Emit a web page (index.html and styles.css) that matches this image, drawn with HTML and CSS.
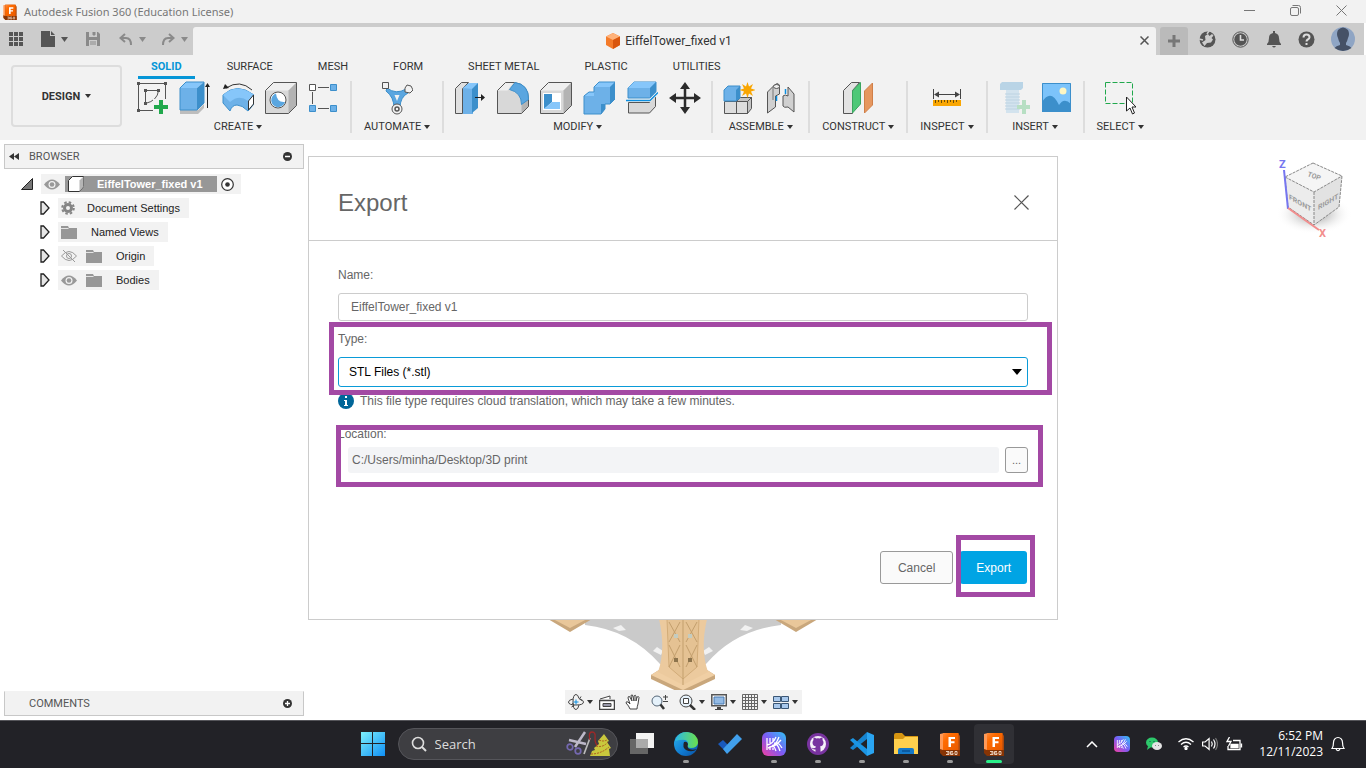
FILE: index.html
```html
<!DOCTYPE html>
<html lang="en">
<head>
<meta charset="utf-8">
<title>Autodesk Fusion 360 (Education License)</title>
<link rel="stylesheet" href="styles.css">
</head>
<body>
<svg class="defs" aria-hidden="true">
  <defs>
    <linearGradient id="g-orange" x1="0" y1="0" x2="1" y2="1"><stop offset="0" stop-color="#ff8a3c"/><stop offset=".3" stop-color="#ff6b00"/><stop offset="1" stop-color="#e85a00"/></linearGradient>
    <linearGradient id="g-win" x1="0" y1="0" x2="1" y2="1"><stop offset="0" stop-color="#7df0fb"/><stop offset="1" stop-color="#0f8ff5"/></linearGradient>
    <linearGradient id="g-k" x1="0" y1="1" x2="1" y2="0"><stop offset="0" stop-color="#f43fa0"/><stop offset=".5" stop-color="#7a5cf5"/><stop offset="1" stop-color="#2fc4f5"/></linearGradient>
    <linearGradient id="g-edge" x1="0" y1="0" x2="1" y2="1"><stop offset="0" stop-color="#2bb5ee"/><stop offset=".6" stop-color="#0f78cf"/><stop offset="1" stop-color="#0b4f9e"/></linearGradient>
    <linearGradient id="g-edge2" x1="0" y1="0" x2="1" y2="0"><stop offset="0" stop-color="#2bb8e8"/><stop offset="1" stop-color="#6be04a"/></linearGradient>
    <symbol id="fusion" viewBox="0 0 24 24">
      <path d="M2 2l4-1v22l-4-3z" fill="#ff9a58"/><path d="M5 1h15l2 3v20H5z" fill="#a8480f"/><path d="M5 1h15.500v17H5z" fill="url(#g-orange)"/><path d="M2 17l3 1v6l-3-3zM5 18h17v6H5z" fill="#873404"/>
      <path d="M10.500 5h6.500v2h-4v2.300h3.500v2H13V15h-2.500z" fill="#fff"/><path d="M8 19.500h3v3H8M9 21h2M15 19.500h-2.500v3H15V21h-2M17 19.500h2v3h-2z" fill="none" stroke="#f1dccb" stroke-width=".9"/>
    </symbol>
    <symbol id="kapp" viewBox="0 0 24 24"><rect width="24" height="24" rx="6" fill="url(#g-k)"/><path d="M5 6v12M8 6v5M8 14v4M11 6v4M11 16v2M14 5Q11 12 5 13M17 5Q14 14 6 16M19 8Q15 13 10 15M12 11q4 1 6 8M10 13q3 2 4 6M14 10q4 2 6 6" fill="none" stroke="#fff" stroke-width="1.300"/></symbol>
    <symbol id="folder" viewBox="0 0 16 13"><path d="M0 0h7l1 2h8v11H0z" fill="#979797"/><path d="M0 2.500h7.500" stroke="#e4e4e4"/></symbol>
    <symbol id="eye" viewBox="0 0 16 11"><path d="M0 5.500Q8-4.500 16 5.500Q8 15.500 0 5.500z" fill="#999"/><circle cx="8" cy="5.500" r="3.500" fill="#f2f2f2"/><circle cx="8" cy="5.500" r="2.300" fill="#999"/></symbol>
    <symbol id="twist" viewBox="0 0 10 14"><path d="M1 1h2.500l5.500 6-5.500 6H1z" fill="#e6e6e6" stroke="#222" stroke-width="1.300"/></symbol>
  </defs>
</svg>

<header class="titlebar">
  <svg class="i16" viewBox="0 0 24 24"><use href="#fusion"/></svg>
  <span class="titlebar-text">Autodesk Fusion 360 (Education License)</span>
  <div class="window-controls">
    <button aria-label="Minimize"><svg width="11" height="11"><path d="M0 5.500h11" stroke="#777"/></svg></button>
    <button aria-label="Restore"><svg width="11" height="11" fill="none" stroke="#777"><rect x=".5" y="2.500" width="8" height="8" rx="1.500"/><path d="M2.500.5h6a2 2 0 0 1 2 2v6"/></svg></button>
    <button aria-label="Close"><svg width="11" height="11"><path d="M.5.5l10 10M10.500.5l-10 10" stroke="#777"/></svg></button>
  </div>
</header>

<div class="quickbar">
  <div class="quick-tools">
    <button aria-label="Data panel"><svg width="14" height="14" fill="#555"><path d="M0 0h4v4H0zM5 0h4v4H5zM10 0h4v4h-4zM0 5h4v4H0zM5 5h4v4H5zM10 5h4v4h-4zM0 10h4v4H0zM5 10h4v4H5zM10 10h4v4h-4z"/></svg></button>
    <button class="with-caret" aria-label="File"><svg width="14" height="16"><path d="M0 0h9v5h5v11H0z" fill="#555"/><path d="M10 0l4 4h-4z" fill="#555"/></svg><svg class="caret" width="7" height="5"><path d="M0 0h7L3.500 5z" fill="#555"/></svg></button>
    <button class="save" aria-label="Save"><svg width="14" height="14"><path d="M0 0h12l2 2v12H0z" fill="#8a8a8a"/><path d="M3 0h8v5H3zM3 8h8v6H3z" fill="#ccc"/><path d="M7 0h2v3H7zM4 10h6M4 12h6" fill="#8a8a8a" stroke="#8a8a8a"/></svg></button>
    <button class="with-caret" aria-label="Undo"><svg width="14" height="13" fill="none" stroke="#8a8a8a" stroke-width="2"><path d="M6 1L1.500 5 6 9M2 5h5q5 0 5 7"/></svg><svg class="caret" width="7" height="5"><path d="M0 0h7L3.500 5z" fill="#8a8a8a"/></svg></button>
    <button class="with-caret" aria-label="Redo"><svg width="14" height="13" fill="none" stroke="#8a8a8a" stroke-width="2"><path d="M8 1l4.500 4L8 9M12 5H7q-5 0-5 7"/></svg><svg class="caret" width="7" height="5"><path d="M0 0h7L3.500 5z" fill="#8a8a8a"/></svg></button>
  </div>
  <div class="doc-tab">
    <svg width="16" height="16"><path d="M8 0l7 3.500v8.500L8 16l-7-4V3.500z" fill="#f47b2a"/><path d="M8 0l7 3.500L8 7 1 3.500z" fill="#ffb27a"/><path d="M8 7l7-3.500v8.500L8 16z" fill="#d9560e"/></svg>
    <span>EiffelTower_fixed v1</span>
    <button class="tab-close" aria-label="Close tab"><svg width="9" height="9"><path d="M.5.5l8 8M8.500.5l-8 8" stroke="#555" stroke-width="1.500"/></svg></button>
  </div>
  <div class="quick-right">
    <button class="new-tab" aria-label="New tab"><svg width="14" height="14"><path d="M7 1v12M1 7h12" stroke="#777" stroke-width="3"/></svg></button>
    <button aria-label="Extensions"><svg width="17" height="17"><circle cx="8.500" cy="8.500" r="8" fill="#555"/><path d="M3 11.500l3.500-2.500-.5-4 3-2 1.500 2 2.500-2 1.500 1.500-2 2.500 1.500 1.500-2 3-4 .5-2.500 3z" fill="#ccc"/><path d="M0 8l4 1M10 0l-2 3" stroke="#ccc" stroke-width="1.500"/></svg></button>
    <button aria-label="Job status"><svg width="17" height="17"><circle cx="8.500" cy="8.500" r="7.700" fill="none" stroke="#555"/><circle cx="8.500" cy="8.500" r="6.200" fill="#555"/><path d="M8.500 4v5H12" fill="none" stroke="#ddd" stroke-width="1.600"/></svg></button>
    <button aria-label="Notifications"><svg width="14" height="17"><path d="M6 0h2v2q4 1 4 5 0 4 2 6v1H0v-1q2-2 2-6 0-4 4-5zM5 15h4q-2 3-4 0z" fill="#555"/></svg></button>
    <button aria-label="Help"><svg width="17" height="17"><circle cx="8.500" cy="8.500" r="8" fill="#555"/><path d="M5.500 6.500q0-3 3-3t3 2.700q0 1.500-1.700 2.300-1.300.7-1.300 2" fill="none" stroke="#ddd" stroke-width="2"/><path d="M7.500 12h2v2h-2z" fill="#ddd"/></svg></button>
    <button class="avatar" aria-label="Account"><svg width="24" height="24"><circle cx="12" cy="12" r="12" fill="#8fa5c4"/><path d="M7 3q5-5 10 0 2 4 0 8-1 4-2 5v2q4 1 5.500 3Q12 27 3.500 21q1.500-2 5.500-3v-2q-1-1-2-5-2-4 0-8z" fill="#455166"/></svg></button>
  </div>
</div>

<div class="ribbon">
  <button class="workspace">DESIGN <svg width="6" height="4"><path d="M0 0h6L3 4z" fill="#333"/></svg></button>
  <div class="ribbon-main">
    <nav class="tabs">
      <button class="tab active">SOLID</button><button class="tab">SURFACE</button><button class="tab">MESH</button><button class="tab">FORM</button><button class="tab">SHEET METAL</button><button class="tab">PLASTIC</button><button class="tab">UTILITIES</button>
    </nav>
    <div class="groups">
      <section class="group">
        <div class="tools">
          <button aria-label="Create sketch"><svg viewBox="0 0 32 34"><path d="M2.500 2.500h27v27h-27z" fill="none" stroke="#555"/><path d="M9.500 9.500h13M9.500 9.500v13M22.500 9.500q-1 10-13 13" fill="none" stroke="#555"/><path d="M1 1h3v3H1zM28 1h3v3h-3zM1 28h3v3H1zM8 8h3v3H8zM21 8h3v3h-3zM8 21h3v3H8z" fill="#555"/><path d="M17 18h15v15H17z" fill="#f2f2f2"/><path d="M23 19h4v5h5v4h-5v5h-4v-5h-5v-4h5z" fill="#20a84c"/></svg></button>
          <button aria-label="Extrude"><svg viewBox="0 0 32 34"><path d="M1 29h18l6-6v4l-6 6H1z" fill="#bdbdbd"/><path d="M1 7h17v22H1z" fill="#6db1e8"/><path d="M1 7l6-6h18l-7 6z" fill="#86c6fa"/><path d="M18 7l7-6v21l-7 7z" fill="#3c8fcb"/><path d="M1 29V7l6-6h18v21l-7 7z" fill="none" stroke="#3c8fcb"/><path d="M28.500 27V4" stroke="#222"/><path d="M26 6l2.500-4L31 6z" fill="#222"/></svg></button>
          <button aria-label="Revolve"><svg viewBox="0 0 32 34"><path d="M1 14q14-13 31 0v9l-6 7q-6-6-11-6t-7 6l-7-8z" fill="#6db1e8" stroke="#3c8fcb"/><path d="M1 14q14-13 31 0l-6 6q-9-7-18 1z" fill="#86c6fa"/><path d="M26.500 20l5-6v9l-5 6z" fill="#fff" stroke="#333"/><path d="M4 7q14-9 26 2" fill="none" stroke="#333"/><path d="M1 8l2-5 4 4z" fill="#222"/></svg></button>
          <button aria-label="Hole"><svg viewBox="0 0 32 34"><path d="M.5 9.500l8-8h23v23l-8 8H.5z" fill="#d8d8d8"/><path d="M.5 9.500l8-8h23l-8 8z" fill="#efefef"/><path d="M23.500 9.500l8-8v23l-8 8z" fill="#b3b3b3"/><path d="M.5 9.500l8-8h23v23l-8 8H.5z" fill="none" stroke="#555"/><circle cx="13" cy="19" r="8" fill="#fff" stroke="#555"/><path d="M11 12.500a7 7 0 1 0 9 8.500q-8 1-9-8.500z" fill="#5aa6e0"/></svg></button>
          <button aria-label="Pattern"><svg viewBox="0 0 32 34"><path d="M10 6.500h11M10 27.500h11M4.500 11v12" stroke="#555"/><path d="M1.500 3.500h6v6h-6z" fill="#fff" stroke="#555"/><path d="M22.500 3.500h6v6h-6zM22.500 24.500h6v6h-6zM1.500 24.500h6v6h-6z" fill="#6db1e8" stroke="#3c8fcb"/></svg></button>
        </div>
        <button class="group-label">CREATE <svg width="6" height="4"><path d="M0 0h6L3 4z" fill="#333"/></svg></button>
      </section>
      <section class="group">
        <div class="tools">
          <button aria-label="Automated modeling"><svg viewBox="0 0 32 34"><path d="M6 7q9 7 19 1l2 4q-8 4-8 15h-6q0-11-8-17z" fill="#5aa6e0" stroke="#3c8fcb"/><path d="M13.500 14h5l-2.500 6z" fill="#f2f2f2"/><path d="M1.500 1.500h6v6h-6z" fill="#f2f2f2" stroke="#555"/><path d="M26 4l4 1 2 4-3 3-5-1v-4z" fill="#f2f2f2" stroke="#555"/><circle cx="16" cy="28" r="5" fill="#f2f2f2" stroke="#555"/><circle cx="16" cy="28" r="2" fill="#f2f2f2" stroke="#555" stroke-width="1.500"/></svg></button>
        </div>
        <button class="group-label">AUTOMATE <svg width="6" height="4"><path d="M0 0h6L3 4z" fill="#333"/></svg></button>
      </section>
      <section class="group">
        <div class="tools">
          <button aria-label="Press pull"><svg viewBox="0 0 32 34"><path d="M1.500 7.500l6-6h7l-6 6v25h-7z" fill="#e0e0e0" stroke="#555"/><path d="M9 7l6-5h9l-5 6v25H9z" fill="#6db1e8"/><path d="M9 7l6-5h9l-5 6z" fill="#86c6fa"/><path d="M18 8l6-6v25l-6 5z" fill="#3c8fcb"/><path d="M21 16.500h8" stroke="#222"/><path d="M27 13l4 3.500-4 3.500z" fill="#222"/></svg></button>
          <button aria-label="Fillet"><svg viewBox="0 0 32 34"><path d="M.5 9.500l8-8h9q14 2 14 17v7l-7 7H.5z" fill="#d8d8d8"/><path d="M.5 9.500l8-8h8l-6 8z" fill="#efefef"/><path d="M24.500 23l7-6v8.500l-7 7z" fill="#b3b3b3"/><path d="M.5 9.500l8-8h9q14 2 14 17v7l-7 7H.5z" fill="none" stroke="#555"/><path d="M18 1.500q14 2 13.500 17l-7 5q0-12-12-15z" fill="#5aa6e0" stroke="#3c8fcb"/></svg></button>
          <button aria-label="Shell"><svg viewBox="0 0 32 34"><path d="M.5 9.500l8-8h23v23l-8 8H.5z" fill="#d8d8d8"/><path d="M.5 9.500l8-8h23l-8 8z" fill="#efefef"/><path d="M23.500 9.500l8-8v23l-8 8z" fill="#b3b3b3"/><path d="M.5 9.500l8-8h23v23l-8 8H.5z" fill="none" stroke="#555"/><path d="M3 12h18v17H3z" fill="#fff"/><path d="M4 13h8v8l-8 7z" fill="#3c8fcb"/><path d="M4 28l8-7h8v7z" fill="#86c6fa"/></svg></button>
          <button aria-label="Combine"><svg viewBox="0 0 32 34"><path d="M1 15l5-4h5V6l5-5h16v17l-5 5h-5v5l-4 5H1z" fill="#6db1e8"/><path d="M11 6l5-5h16l-5 5zM1 15l5-4h5v4z" fill="#86c6fa"/><path d="M27 6l5-5v17l-5 5zM18 23h4v5l-4 5z" fill="#3c8fcb"/><path d="M1 15l5-4h5V6l5-5h16v17l-5 5h-5v5l-4 5H1z" fill="none" stroke="#3c8fcb"/></svg></button>
          <button aria-label="Split body"><svg viewBox="0 0 32 34"><path d="M2.500 21.500h21l6-6v10l-6 6.500h-21z" fill="#d8d8d8" stroke="#555"/><path d="M2 7l6-6h22v10l-6 6H2z" fill="#6db1e8" stroke="#3c8fcb"/><path d="M2 7l6-6h22l-6 6z" fill="#86c6fa"/><path d="M24 7l6-6v10l-6 6z" fill="#3c8fcb"/><path d="M0 19.500h24l8-8" fill="none" stroke="#f2f2f2" stroke-width="3"/><path d="M0 19.500h24l8-8" fill="none" stroke="#0b8ee0" stroke-width="1.400"/></svg></button>
          <button aria-label="Move"><svg viewBox="0 0 32 34"><path d="M16 6v22M5 17h22" stroke="#2b2b2b" stroke-width="2.500"/><path d="M16 1l5 7H11zM16 33l5-7H11zM0 17l7-5v10zM32 17l-7-5v10z" fill="#2b2b2b"/></svg></button>
        </div>
        <button class="group-label">MODIFY <svg width="6" height="4"><path d="M0 0h6L3 4z" fill="#333"/></svg></button>
      </section>
      <section class="group">
        <div class="tools">
          <button aria-label="New component"><svg viewBox="0 0 32 34"><path d="M1.500 20.500h12v12h-12zM13.500 20.500h11v12h-11z" fill="#ddd" stroke="#555"/><path d="M13.500 20.500l4-4h11l-4 4zM24.500 20.500l4-4v11l-4 5z" fill="#c4c4c4" stroke="#555"/><path d="M1 9l4-4h12v12l-4 3H1z" fill="#6db1e8" stroke="#3c8fcb"/><path d="M13 9l4-4v12l-4 3z" fill="#3c8fcb"/><path d="M24.500 1l1.500 4.500 4-2.500-2 4.500 4.500 1.500-4.500 1.500 2 4.500-4-2.500-1.500 4.500-1.500-4.500-4 2.500 2-4.500-4.500-1.500 4.500-1.500-2-4.500 4 2.500z" fill="#f9a602"/></svg></button>
          <button aria-label="Joint"><svg viewBox="0 0 32 34"><path d="M1.500 11l7-7q3-3 5 0v9l-4 2v11l-8 6z" fill="#d0d0d0" stroke="#555"/><path d="M7 6v13" stroke="#777"/><ellipse cx="10.500" cy="5.500" rx="3" ry="2" fill="#eee" stroke="#555"/><path d="M17 15q2-2 5 0V6l6 7v18l-6-5q-4 1-5-1z" fill="#d0d0d0" stroke="#555"/><path d="M10.500 15v5M19.500 8v5" stroke="#0b8ee0" stroke-width="1.500"/></svg></button>
        </div>
        <button class="group-label">ASSEMBLE <svg width="6" height="4"><path d="M0 0h6L3 4z" fill="#333"/></svg></button>
      </section>
      <section class="group">
        <div class="tools">
          <button aria-label="Offset plane"><svg viewBox="0 0 32 34"><path d="M1.500 9.500l8-8h8l-7 8v23h-9z" fill="#e3e3e3" stroke="#555"/><path d="M10.500 10l8-8.500V23l-8 9z" fill="#4fc878" stroke="#3aa55f"/><path d="M22.500 10l8-8v22l-8 8z" fill="#e6975f" stroke="#d07f48"/></svg></button>
        </div>
        <button class="group-label">CONSTRUCT <svg width="6" height="4"><path d="M0 0h6L3 4z" fill="#333"/></svg></button>
      </section>
      <section class="group">
        <div class="tools">
          <button aria-label="Measure"><svg viewBox="0 0 32 34"><path d="M2.500 8v10M29.500 8v10M4 13.500h24" stroke="#444"/><path d="M3 13.500l5-3v6zM29 13.500l-5-3v6z" fill="#444"/><path d="M2 19h28v6H2z" fill="#f9a602"/><path d="M4.500 19v3M7.500 19v2M10.500 19v3M13.500 19v2M16.500 19v3M19.500 19v2M22.500 19v3M25.500 19v2" stroke="#6b4b05"/></svg></button>
        </div>
        <button class="group-label">INSPECT <svg width="6" height="4"><path d="M0 0h6L3 4z" fill="#333"/></svg></button>
      </section>
      <section class="group">
        <div class="tools">
          <button aria-label="Insert fastener"><svg viewBox="0 0 32 34"><path d="M2 3l2-2h21v6l-2 2H2z" fill="#b9d4e6"/><path d="M8 9h13v23H8z" fill="#d3e3ee"/><path d="M7 13h15M7 16h15M7 19h15M7 22h15M7 25h15M7 28h15" stroke="#bdd3e2"/><path d="M24 19h4v5h4v4h-4v5h-4v-5h-5v-4h5z" fill="#b7dfc3"/></svg></button>
          <button aria-label="Insert image"><svg viewBox="0 0 32 34"><path d="M1 2h29v29H1z" fill="#7cc3fa"/><path d="M1 21q9-14 17 3 5-8 12-1v8H1z" fill="#3c8fcb"/><circle cx="22" cy="10" r="3.500" fill="#fdf6c3"/><path d="M1.500 2.500h28v28h-28z" fill="none" stroke="#3c8fcb"/></svg></button>
        </div>
        <button class="group-label">INSERT <svg width="6" height="4"><path d="M0 0h6L3 4z" fill="#333"/></svg></button>
      </section>
      <section class="group">
        <div class="tools">
          <button aria-label="Select"><svg viewBox="0 0 32 34"><path d="M1.500 1.500h27v21h-27z" fill="none" stroke="#20a84c" stroke-dasharray="5 2"/><path d="M22.500 16v14l3.500-3 2.500 6 2-1-2.500-6h4z" fill="#fff" stroke="#222"/></svg></button>
        </div>
        <button class="group-label">SELECT <svg width="6" height="4"><path d="M0 0h6L3 4z" fill="#333"/></svg></button>
      </section>
    </div>
  </div>
</div>

<main class="canvas">
  <svg class="model" viewBox="548 619 270 72">
    <path d="M585 619h196v6Q735 630 706 664H660Q630 630 585 625z" fill="#cacaca"/>
    <path d="M613 628l8-3 5 5-7 1zM753 628l-8-3-5 5 7 1zM653 651l4-4 6 4-2 4zM713 651l-4-4-6 4 2 4z" fill="#f1f1f1"/>
    <path d="M548 619h44l-22 13z" fill="#c9a77c"/><path d="M553 619h34l-17 9z" fill="#e9c79a"/>
    <path d="M774 619h44l-22 13z" fill="#c9a77c"/><path d="M779 619h34l-17 9z" fill="#e9c79a"/>
    <path d="M651 675l8-5h48l8 5v4l-32 15-32-15z" fill="#c9a77c"/><path d="M651 675l8-5h48l8 5-32 15z" fill="#f0cfa4"/>
    <path d="M659 619h48q-7 30 1 53l-25 13-25-13q8-23 1-53z" fill="#ecca9e"/>
    <path d="M667 619l2 48 14 12 14-12 2-48" fill="#e5c293" stroke="#d2ac79"/>
    <path d="M683 619v66M669 622l11 20M680 622l-11 20M669 645l11 22M680 645l-11 22M686 622l11 20M697 622l-11 20M686 645l11 22M697 645l-11 22" fill="none" stroke="#c39f6d"/>
    <path d="M674 634h4v4h-4zM688 634h4v4h-4z" fill="#c4ccc0"/><path d="M674 658h4v4h-4zM688 658h4v4h-4z" fill="#8d744d"/>
  </svg>

  <aside class="side">
    <div class="panel-bar"><svg width="10" height="7"><path d="M5 0v7L0 3.500zM10 0v7L5 3.500z" fill="#333"/></svg><span>BROWSER</span><button aria-label="Collapse browser"><svg width="9" height="9"><circle cx="4.500" cy="4.500" r="4.500" fill="#333"/><path d="M2 4.500h5" stroke="#fff" stroke-width="1.500"/></svg></button></div>
    <ul class="tree">
      <li class="root">
        <svg class="root-arrow" width="12" height="12"><path d="M11.500.5v11H.5z" fill="#777" stroke="#222"/></svg>
        <div class="node"><svg width="16" height="11"><use href="#eye"/></svg>
          <span class="node-selected"><svg width="16" height="16"><path d="M.5 4.500l4-4h11v10l-4 5H.5z" fill="#fff" stroke="#333"/><path d="M11.500 4.500l4-4v10l-4 5z" fill="#b5b5b5"/></svg><b>EiffelTower_fixed v1</b></span>
          <svg width="13" height="13"><circle cx="6.500" cy="6.500" r="5.800" fill="#fff" stroke="#333" stroke-width="1.200"/><circle cx="6.500" cy="6.500" r="2.300" fill="#333"/></svg></div>
      </li>
      <li><svg width="10" height="14"><use href="#twist"/></svg><div class="node"><svg width="14" height="14"><circle cx="7" cy="7" r="3.500" fill="none" stroke="#858585" stroke-width="3"/><circle cx="7" cy="7" r="5.800" fill="none" stroke="#858585" stroke-width="2" stroke-dasharray="2.500 2.055"/></svg><span class="gap-s">Document Settings</span></div></li>
      <li><svg width="10" height="14"><use href="#twist"/></svg><div class="node"><svg width="16" height="13"><use href="#folder"/></svg><span>Named Views</span></div></li>
      <li><svg width="10" height="14"><use href="#twist"/></svg><div class="node"><svg width="16" height="12" fill="none" stroke="#999"><path d="M.5 6Q8-3 15.500 6 8 15 .5 6zM2 0l12 12"/><circle cx="8" cy="6" r="2.500"/></svg><svg class="gap-i" width="16" height="13"><use href="#folder"/></svg><span>Origin</span></div></li>
      <li><svg width="10" height="14"><use href="#twist"/></svg><div class="node"><svg width="16" height="11"><use href="#eye"/></svg><svg class="gap-i" width="16" height="13"><use href="#folder"/></svg><span>Bodies</span></div></li>
    </ul>
    <div class="panel-bar comments"><span>COMMENTS</span><button aria-label="Expand comments"><svg width="9" height="9"><circle cx="4.500" cy="4.500" r="4.500" fill="#333"/><path d="M2 4.500h5M4.500 2v5" stroke="#fff" stroke-width="1.300"/></svg></button></div>
  </aside>

  <svg class="viewcube" viewBox="1274 155 80 86">
    <defs><radialGradient id="g-shade"><stop offset="0" stop-color="#888"/><stop offset="1" stop-color="#fff" stop-opacity="0"/></radialGradient></defs>
    <ellipse cx="1314" cy="214" rx="38" ry="20" fill="url(#g-shade)"/>
    <path d="M1313 163l29 13-28 16-29-15z" fill="#f5f5f5"/><path d="M1285 177l29 15v33l-26-18z" fill="#ececec"/><path d="M1342 176l-28 16v33l25-18z" fill="#e2e2e2"/>
    <path d="M1313 163l29 13-3 31-25 18-26-18-3-30zM1285 177l29 15 28-16M1314 192v33" fill="none" stroke="#888" stroke-dasharray="3 1"/>
    <path d="M1284 170l4 39" stroke="#7676f0" stroke-width="2"/><path d="M1288 208l31 22" stroke="#f28d8d" stroke-width="2"/>
    <g class="cube-text"><text transform="translate(1289 199) skewY(30)">FRONT</text><text transform="translate(1318 210) skewY(-30)">RIGHT</text><text transform="translate(1307 176) rotate(20)">TOP</text></g>
    <text class="axis axis-z" x="1279" y="168">Z</text><text class="axis axis-x" x="1319" y="237">X</text>
  </svg>

  <div class="navbar">
    <button aria-label="Orbit"><svg width="16" height="16" fill="none" stroke="#444"><path d="M5 5Q.5 6 .5 8q0 3 7.500 3t7.500-3q0-2-4-3M11 11q-1 4.500-3 4.500-3 0-3-7.500t3-7.500q2 0 3 4"/><path d="M8 5.500v5M5.500 8h5" stroke="#0b8ee0"/><path d="M13 2.500L11.500 5l2.500 1.500M3.500 13L6 11.500 4.500 9"/></svg><svg width="6" height="4"><path d="M0 0h6L3 4z" fill="#333"/></svg></button>
    <button class="plain" aria-label="Look at"><svg width="16" height="15" fill="#fff" stroke="#444"><path d="M1 4l10-3v3"/><path d="M.5 5.500h15v9H.5z" stroke-width="1.500"/><path d="M4 8.500h8v3H4z" fill="#99a"/></svg></button>
    <button class="plain" aria-label="Pan"><svg width="16" height="16"><path d="M5 15Q4 12 1 9q0-2 2-1l2 2L3 4q0-2 1.500-1.500L7 7 6 2q0-1.500 1.500-1L9 7V2q1.500-1.500 2 0v5l1-4q2-1 2 .5L13 10q-1 3-1 5z" fill="#fff" stroke="#444"/></svg></button>
    <button class="plain" aria-label="Zoom"><svg width="18" height="16"><circle cx="6" cy="7" r="5" fill="#e5f1fa" stroke="#567"/><path d="M9.500 10.500L13 15" stroke="#333" stroke-width="2.500"/><path d="M12 3h5M14.500 1v5M12 7.500h5" stroke="#444"/></svg></button>
    <button aria-label="Zoom window"><svg width="17" height="16"><circle cx="7" cy="7" r="6" fill="#e5f1fa" stroke="#444"/><path d="M4.500 4.500h5v5h-5z" fill="#fff" stroke="#444"/><path d="M11 11l5 5" stroke="#333" stroke-width="2.500"/></svg><svg width="6" height="4"><path d="M0 0h6L3 4z" fill="#333"/></svg></button>
    <button aria-label="Display settings"><svg width="16" height="16"><path d="M.8.8h14.500v11H.8z" fill="#fff" stroke="#555" stroke-width="1.500"/><path d="M3 3h10v7H3z" fill="#94bbe5" stroke="#4678b0"/><path d="M6 13h4v2h2v1H4v-1h2z" fill="#444"/></svg><svg width="6" height="4"><path d="M0 0h6L3 4z" fill="#333"/></svg></button>
    <button aria-label="Grid settings"><svg width="16" height="16" stroke="#666" fill="none"><path d="M.5.5h15v15H.5zM3.500 0v16M6.500 0v16M9.500 0v16M12.500 0v16M0 3.500h16M0 6.500h16M0 9.500h16M0 12.500h16"/></svg><svg width="6" height="4"><path d="M0 0h6L3 4z" fill="#333"/></svg></button>
    <button aria-label="Viewports"><svg width="16" height="13" fill="#a8c8ec" stroke="#3a5675"><path d="M.5.5h7v5h-7zM8.500.5h7v5h-7zM.5 7.500h7v5h-7zM8.500 7.500h7v5h-7z"/></svg><svg width="6" height="4"><path d="M0 0h6L3 4z" fill="#333"/></svg></button>
  </div>

  <form class="dialog" role="dialog" aria-labelledby="dialog-title">
    <div class="dialog-head"><h1 id="dialog-title">Export</h1><button type="button" aria-label="Close"><svg width="15" height="15"><path d="M.5.5l14 14M14.500.5l-14 14" stroke="#555" stroke-width="1.200"/></svg></button></div>
    <div class="dialog-body">
      <div class="field"><label for="name">Name:</label><input id="name" type="text" value="EiffelTower_fixed v1"></div>
      <div class="field marked-type"><label for="type">Type:</label>
        <div class="select-wrap"><select id="type"><option>STL Files (*.stl)</option></select><svg width="10" height="6"><path d="M0 0h10L5 6z" fill="#000"/></svg></div></div>
      <p class="info"><svg width="16" height="16"><circle cx="8" cy="8" r="8" fill="#006699"/><path d="M7 3h2v2H7zM6 7h3v5h1v1H6v-1h1V8H6z" fill="#fff"/></svg>This file type requires cloud translation, which may take a few minutes.</p>
      <div class="field marked-location"><label for="location">Location:</label>
        <div class="location-row"><input id="location" type="text" value="C:/Users/minha/Desktop/3D print" readonly><button type="button" class="browse" aria-label="Browse">...</button></div></div>
      <div class="actions"><button type="button" class="btn">Cancel</button><div class="marked-export"><button type="button" class="btn primary">Export</button></div></div>
    </div>
  </form>
</main>

<footer class="taskbar">
  <div class="apps">
    <button class="app" aria-label="Start"><svg width="24" height="24"><path d="M0 0h11v11H0zM12 0h12v11H12zM0 12h11v12H0zM12 12h12v12H12z" fill="url(#g-win)"/></svg></button>
    <label class="search"><svg width="16" height="16"><circle cx="7" cy="7" r="5.500" fill="none" stroke="#ddd" stroke-width="1.600"/><path d="M11 11l4 4" stroke="#ddd" stroke-width="2"/></svg><input type="text" aria-label="Search" placeholder="Search">
      <svg width="46" height="28"><path d="M19 2L9 17M3 10l17 4" stroke="#bdb9c9" stroke-width="2.500"/><circle cx="4" cy="17" r="2.800" fill="none" stroke="#7468b0" stroke-width="1.700"/><circle cx="12" cy="21" r="2.800" fill="none" stroke="#7468b0" stroke-width="1.700"/><path d="M24 8l-6 16" stroke="#bbb" stroke-width="1.700"/><path d="M24 10Q22 2 26 2t3 6q0 12 11 6" fill="none" stroke="#a12828" stroke-width="1.300"/><path d="M38 4l5 7-2 1 4 6-2 1 1 7H24l2-5 3-1-1-2 5-4-1-3z" fill="#c9c83d"/><path d="M30 16q7 2 12-4M25 24q10 0 18-7M33 10q4 2 8 0" fill="none" stroke="#b05c20" stroke-dasharray="2 1"/></svg></label>
    <button class="app" aria-label="Task view"><svg width="24" height="24"><path d="M0 7h18v15H0z" fill="#666"/><path d="M6 1h18v15H6z" fill="#f2f2f2"/><path d="M6 7h12v9H6z" fill="#aaa"/></svg></button>
    <button class="app running" aria-label="Edge"><svg width="24" height="24"><circle cx="12" cy="12" r="12" fill="url(#g-edge)"/><path d="M1 9Q4 0 13 0q11 1 11 11-1 5-7 5-4 0-3-3 1-8-13-4z" fill="url(#g-edge2)"/><path d="M14 12q-1 2 0 4 3 3 9 1-5 4-11 1-4-3-2-8 3-1 4 2z" fill="#222228"/></svg></button>
    <button class="app" aria-label="To Do"><svg width="24" height="24"><path d="M0 12l5-4 7 7-3 6z" fill="#195abd"/><path d="M5 17L19 2l5 5L9 22z" fill="#41a0ed"/></svg></button>
    <button class="app running" aria-label="Learning app"><svg width="24" height="24"><use href="#kapp"/></svg></button>
    <button class="app running" aria-label="GitHub Desktop"><svg width="24" height="24"><circle cx="12" cy="12" r="11" fill="#78339f"/><circle cx="12" cy="12" r="8" fill="#f5f0f8"/><path d="M9.500 20.500v-3q-3 .5-4-2 2 1.200 4 .2 0-.8.500-1.200-3.500-.5-3.500-4 0-1.500 1-2.500-.3-1.500.2-2.500 1.300 0 2.500 1 1.800-.5 3.600 0 1.200-1 2.500-1 .5 1 .2 2.500 1 1 1 2.500 0 3.500-3.500 4 .5.700.500 1.800v4z" fill="#78339f"/></svg></button>
    <button class="app running" aria-label="Visual Studio Code"><svg width="24" height="24"><path d="M17 0l7 3v18l-7 3z" fill="#2aa5f2"/><path d="M17 0v7L3 18l-3-2z" fill="#1684d0"/><path d="M17 24v-7L3 6 0 8z" fill="#1b95e4"/></svg></button>
    <button class="app running" aria-label="File Explorer"><svg width="24" height="24"><path d="M0 3q0-2 2-2h6l3 3h13v6H0z" fill="#d69511"/><path d="M0 7h9l2-2h13v17H0z" fill="#ffd04d"/><path d="M4 22v-4q0-2 2-2h12q2 0 2 2v4z" fill="#1579c8"/><path d="M8 18h8v2H8z" fill="#0b5ba1"/></svg></button>
    <button class="app running" aria-label="Fusion 360"><svg width="24" height="24"><use href="#fusion"/></svg></button>
    <button class="app running current" aria-label="Fusion 360 active"><svg width="24" height="24"><use href="#fusion"/></svg></button>
  </div>
  <div class="tray">
    <svg width="12" height="7"><path d="M1 6l5-5 5 5" fill="none" stroke="#fff" stroke-width="1.500"/></svg>
    <svg width="16" height="16"><use href="#kapp"/></svg>
    <svg width="16" height="14"><ellipse cx="6" cy="5.500" rx="6" ry="5" fill="#2dc96b"/><path d="M2 9l-1 4 4-3z" fill="#2dc96b"/><ellipse cx="11" cy="9" rx="5" ry="4" fill="#e5e5e5"/><path d="M3.500 4h1v1h-1zM7.500 4h1v1h-1z" fill="#145"/><path d="M9 8h1v1H9zM12 8h1v1h-1z" fill="#888"/></svg>
    <div class="status"><svg width="16" height="12" fill="none" stroke="#fff" stroke-width="1.300"><path d="M.5 4q7.500-6.500 15 0M3 6.500q5-4.500 10 0M5.500 9q2.500-2 5 0"/><circle cx="8" cy="10.500" r="1" fill="#fff"/></svg>
    <svg width="16" height="14" fill="none" stroke="#fff" stroke-width="1.200"><path d="M.6 5v4h2.500l4 3.500v-11l-4 3.500zM9.500 4.500q1.500 2.500 0 5M11.500 2.500q3 4.500 0 9"/><path d="M13.500 1q4 6 0 12" stroke="#777"/></svg>
    <svg width="17" height="14" fill="none" stroke="#fff" stroke-width="1.300"><path d="M7 3.500h7v9H2V9M15.500 6.500v4"/><path d="M5 7.500h7v3H5z" fill="#fff"/><path d="M3.500 0L1 4.500h4L2.500 9" /></svg></div>
    <div class="clock"><span>6:52 PM</span><span>12/11/2023</span></div>
    <svg width="14" height="16" fill="none" stroke="#fff" stroke-width="1.200"><path d="M1 12.500q1.500-2 1.500-6a4.500 5 0 0 1 9 0q0 4 1.500 6zM5 13q2 3.500 4 0"/></svg>
  </div>
</footer>
</body>
</html>
```
FILE: styles.css
```css
* { box-sizing: border-box; }
body { margin: 0; min-height: 100vh; display: flex; flex-direction: column; background: #fff; font-family: "Liberation Sans", Arial, sans-serif; font-size: 12px; color: #333; }
button { margin: 0; padding: 0; border: 0; background: none; font: inherit; color: inherit; display: flex; align-items: center; justify-content: center; }
svg { display: block; flex: none; }
.defs { position: absolute; width: 0; height: 0; }
.i16 { width: 16px; height: 16px; }

.titlebar { height: 23px; display: flex; align-items: center; gap: 6px; padding-left: 2px; background: #f2f2f2; font-family: "Noto Sans", sans-serif; font-size: 11px; color: #777; }
.window-controls { margin-left: auto; display: flex; padding: 0 2px 3px 0; }
.window-controls button { width: 46px; height: 20px; }

.quickbar { height: 32px; display: flex; align-items: flex-end; margin-right: 2px; background: #ccc; }
.quick-tools { width: 193px; height: 32px; flex: none; display: flex; align-items: center; padding-left: 9px; gap: 18px; }
.with-caret { gap: 6px; }
.save { margin: 0 1px 0 3px; }
.quick-tools .with-caret { margin-right: -3px; }
.doc-tab { flex: 1; height: 28px; display: flex; align-items: center; justify-content: center; gap: 4px; position: relative; padding-right: 12px; background: #f2f2f2; border-radius: 3px 3px 0 0; font-family: Roboto, sans-serif; color: #333; }
.tab-close { position: absolute; right: 7px; top: 9px; }
.quick-right { flex: none; display: flex; align-items: center; height: 32px; padding: 0 9px 0 4px; }
.quick-right button { width: 33px; }
.quick-right .new-tab { width: 28px; height: 28px; margin: 4px 3px 0 0; background: #bababa; border-radius: 3px 3px 0 0; }
.quick-right .avatar { width: 24px; margin-left: 8px; }

.ribbon { display: flex; align-items: flex-start; gap: 8px; height: 85px; padding-left: 11px; background: #f2f2f2; font-family: Roboto, sans-serif; font-size: 11px; color: #333; }
.workspace { width: 111px; height: 62px; margin-top: 10px; border: 2px solid #ddd; border-radius: 4px; font-weight: 700; gap: 5px; }
.tabs { display: flex; gap: 19px; padding-left: 8px; height: 24px; }
.tab { height: 24px; padding: 2px 13px 0; border-bottom: 3px solid transparent; }
.tab.active { color: #0696d7; font-weight: 700; border-color: #0696d7; }
.groups { display: flex; padding-top: 2px; }
.group { height: 52px; border-left: 2px solid #ddd; display: flex; flex-direction: column; align-items: center; justify-content: space-between; margin-left: -1px; padding-right: 1px; }
.group:first-child { border-color: transparent; margin-left: -6px; }
.tools { display: flex; gap: 11px; padding: 0 10px; }
.tools svg { width: 32px; height: 34px; }
.group-label { height: 13px; padding: 0 12px; gap: 3px; }

.canvas { flex: 1; position: relative; display: flex; padding: 4px; background: #fff; }
.side { width: 300px; display: flex; flex-direction: column; }
.panel-bar { height: 25px; display: flex; align-items: center; gap: 10px; padding: 0 11px 0 4px; border: 1px solid #c8c8c8; background: #f2f2f2; font-family: Roboto, sans-serif; font-size: 11px; color: #555; }
.panel-bar button { margin-left: auto; }
.comments { margin-top: auto; padding-left: 24px; border-top-color: #f2f2f2; }
.tree { list-style: none; margin: 3px 0 0; padding: 0 0 0 36px; font-size: 11px; color: #222; }
.tree li { display: flex; align-items: center; gap: 8px; height: 24px; }
.tree .root { margin-left: -19px; }
.node { height: 20px; display: flex; align-items: center; background: #f2f2f2; padding: 0 9px 0 3px; }
.node span { margin-left: 14px; }
.node .gap-s { margin-left: 12px; }
.gap-i { margin-left: 9px; }
.root .node { padding-right: 7px; }
.node .node-selected { display: flex; align-items: center; gap: 13px; margin: 0 4px 0 5px; padding: 0 14px 0 3px; height: 16px; background: #979797; color: #fff; }

.model { position: absolute; left: 0; right: 0; margin: 0 auto; bottom: 29px; width: 270px; height: 72px; }
.viewcube { position: absolute; right: 12px; top: 15px; width: 80px; height: 86px; }
.cube-text { font: 700 7px Roboto, sans-serif; fill: #9a9a9a; }
.axis { font: 700 11px Roboto, sans-serif; }
.axis-z { fill: #7676f0; }
.axis-x { fill: #f28d8d; }

.navbar { position: absolute; left: 0; right: 0; bottom: 6px; width: max-content; margin: 0 auto; height: 24px; display: flex; align-items: center; gap: 6px; padding: 0 4px 0 3px; background: #f2f2f2; }
.navbar button { gap: 3px; }
.navbar .plain { margin-right: 4px; }

.dialog { position: absolute; left: 0; right: 0; top: 16px; width: 750px; max-width: 100%; margin: 0 auto; background: #fff; border: 1px solid #ccc; color: #666; }
.dialog-head { height: 84px; display: flex; align-items: center; justify-content: space-between; padding: 8px 28px 0 29px; border-bottom: 1px solid #ccc; }
.dialog-head h1 { margin: 0; font-size: 24px; font-weight: 400; }
.dialog-body { padding: 26px 29px 35px; }
.field { position: relative; }
.field label { display: block; line-height: 16px; }
.field input, .field select { width: 100%; font: inherit; color: #666; background: #fff; border: 1px solid #ccc; border-radius: 3px; outline: 0; }
#name { display: block; height: 28px; margin-top: 10px; padding: 0 12px; }
.marked-type { margin-top: 10px; }
.select-wrap { position: relative; margin-top: 10px; }
.field select { display: block; appearance: none; height: 30px; padding: 0 10px; color: #000; border-color: #0a9bd8; }
.select-wrap svg { position: absolute; right: 6px; top: 12px; pointer-events: none; }
.info { display: flex; align-items: center; gap: 6px; margin: 6px 0 0; line-height: 16px; }
.marked-location { margin-top: 17px; }
.location-row { display: flex; gap: 6px; margin-top: 5px; padding-left: 10px; }
.location-row input { flex: 1; height: 26px; padding: 0 4px; border: 0; background: #f3f4f6; }
.browse { width: 23px; height: 26px; border: 1px solid #999; border-radius: 3px; background: #fafafa; font-size: 11px; }
.actions { display: flex; justify-content: flex-end; gap: 7px; margin: 78px 1px 0 0; }
.btn { height: 33px; padding: 0 17px; border: 1px solid #999; border-radius: 3px; background: #fafafa; }
.btn.primary { padding: 0 16px; border: 0; background: #00a4e4; color: #fff; }
.marked-export { position: relative; }
.marked-type::after, .marked-location::after, .marked-export::after { content: ""; position: absolute; z-index: 1; border: 5px solid #a349a4; pointer-events: none; }
.marked-type::after { inset: -9px -24px -8px -9px; }
.marked-location::after { inset: -1px -15px -14px -2px; }
.marked-export::after { inset: -16px -8px -13px -4px; }

.taskbar { height: 48px; display: grid; grid-template-columns: 1fr auto 1fr; align-items: center; background: #222227; box-shadow: inset 0 1px #55555a; font-family: "Open Sans", sans-serif; color: #fff; }
.apps { grid-column: 2; display: flex; align-items: center; }
.app { width: 40px; height: 40px; margin: 0 2px; position: relative; border-radius: 4px; }
.app.running::after { content: ""; position: absolute; bottom: 1px; left: 17px; width: 6px; height: 3px; border-radius: 2px; background: #999; }
.app.current { background: #303035; }
.app.current::after { left: 12px; width: 16px; background: #2bf08a; }
.search { width: 220px; height: 32px; margin: 0 2px 0 3px; display: flex; align-items: center; gap: 8px; padding: 0 5px 0 12px; border: 1px solid #55555a; border-radius: 16px; background: #3e3e42; }
.search input { flex: 1; min-width: 0; padding: 0; border: 0; background: none; font: 13px "Open Sans", sans-serif; outline: 0; }
.search input::placeholder { color: #ddd; }
.tray { display: flex; align-items: center; justify-content: flex-end; gap: 16px; padding-right: 21px; }
.status { display: flex; align-items: center; gap: 8px; }
.clock { display: flex; flex-direction: column; align-items: flex-end; font-size: 12px; line-height: 16px; margin-right: -8px; }
```
